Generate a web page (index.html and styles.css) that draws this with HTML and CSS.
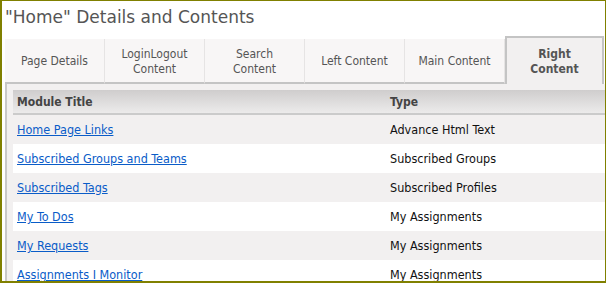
FILE: index.html
```html
<!DOCTYPE html>
<html lang="en">
<head>
    <meta charset="UTF-8">
    <title>"Home" Details and Contents</title>
    <link rel="stylesheet" href="styles.css">
</head>
<body>
    <div class="frame">
        <h1 class="title">"Home" Details and Contents</h1>

        <div class="tabs">
            <div class="tab">Page Details</div>
            <div class="tab">LoginLogout<br>Content</div>
            <div class="tab">Search<br>Content</div>
            <div class="tab">Left Content</div>
            <div class="tab">Main Content</div>
            <div class="tab active">Right<br>Content</div>
        </div>

        <div class="panel">
            <table class="grid">
                <thead>
                    <tr><th class="col-title">Module Title</th><th>Type</th></tr>
                </thead>
                <tbody>
                    <tr><td><a href="#">Home Page Links</a></td><td>Advance Html Text</td></tr>
                    <tr><td><a href="#">Subscribed Groups and Teams</a></td><td>Subscribed Groups</td></tr>
                    <tr><td><a href="#">Subscribed Tags</a></td><td>Subscribed Profiles</td></tr>
                    <tr><td><a href="#">My To Dos</a></td><td>My Assignments</td></tr>
                    <tr><td><a href="#">My Requests</a></td><td>My Assignments</td></tr>
                    <tr><td><a href="#">Assignments I Monitor</a></td><td>My Assignments</td></tr>
                </tbody>
            </table>
        </div>
    </div>
</body>
</html>
```

FILE: styles.css
```css
html, body { margin: 0; padding: 0; background: #fff; }
body { font-family: "DejaVu Sans Condensed", "DejaVu Sans", Tahoma, sans-serif; font-size: 12px; color: #222; }

.frame { width: 603px; height: 280px; border: 1px solid #808000; border-left-width: 2px; border-bottom-width: 2px; overflow: hidden; }

.title { margin: 0; padding: 6px 0 0 3px; height: 29px; box-sizing: border-box; font-family: "DejaVu Sans", Tahoma, sans-serif; font-size: 17px; font-weight: normal; color: #555; line-height: 20px; }

.tabs { display: flex; align-items: flex-end; margin: 6px 0 0 3px; height: 48px; }
.tab { width: 99px; height: 41px; padding-top: 2px; display: flex; align-items: center; justify-content: center; text-align: center; background: #f8f6f6; border-right: 1px solid #e6e4e4; border-bottom: 2px solid #c4c4c4; color: #555; font-size: 12px; line-height: 15px; }
.tab.active { width: 95px; height: 44px; border: 2px solid #c4c4c4; border-bottom: none; background: #f2f0f0; font-weight: bold; }

.panel { margin-left: 3px; background: #f2f0f0; border-left: 2px solid #c8c8c8; padding: 6px 0 0 6px; height: 200px; }

.grid { width: 100%; border-collapse: collapse; }
.grid th { text-align: left; font-weight: bold; color: #444; font-size: 12px; height: 23px; padding: 0 4px; background: linear-gradient(#cfcdcd, #ecebeb); border-bottom: 2px solid #cbcbcb; }
.grid th.col-title { width: 365px; }
.grid td { height: 29px; padding: 0 4px; font-size: 12.5px; color: #111; }
.grid tbody tr:nth-child(odd) td { background: #f2f0f0; }
.grid tbody tr:nth-child(even) td { background: #fff; }
.grid a { color: #0a5cc8; }
```
